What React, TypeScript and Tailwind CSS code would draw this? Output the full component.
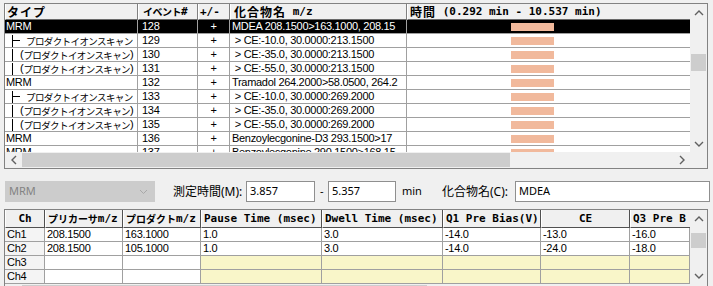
import React from "react";

const dataFont = "font-['Liberation_Sans','Noto_Sans_CJK_JP',sans-serif] text-[11px] tracking-[-0.3px]";
const headFont = "font-['DejaVu_Sans_Mono','Noto_Sans_CJK_JP',monospace] text-[11px] font-bold tracking-[0px] leading-[14px]";
const uiFont = "font-['Noto_Sans','Noto_Sans_CJK_JP',sans-serif] text-[12px]";

function Chev({ dir }: { dir: "up" | "down" | "left" | "right" }) {
  const vertical = dir === "up" || dir === "down";
  const pts =
    dir === "up" ? "1,6 5,2 9,6" : dir === "down" ? "1,2 5,6 9,2" : dir === "left" ? "6,1 2,5 6,9" : "2,1 6,5 2,9";
  return (
    <svg width={vertical ? 10 : 8} height={vertical ? 8 : 10} viewBox={vertical ? "0 0 10 8" : "0 0 8 10"}>
      <polyline points={pts} fill="none" stroke="#606060" strokeWidth="1.4" />
    </svg>
  );
}

type CjkKind = "wide" | "narrow" | "bottom";

const CJK = ({ children, kind }: { children: React.ReactNode; kind: CjkKind }) => (
  <span
    className={
      kind === "wide"
        ? "font-['Noto_Sans_CJK_JP',sans-serif] text-[12px] font-bold leading-[14px] tracking-[1px]"
        : kind === "narrow"
        ? "font-['Noto_Sans_CJK_JP',sans-serif] text-[10px] font-bold leading-[14px] tracking-[-0.5px]"
        : "font-['Noto_Sans_CJK_JP',sans-serif] text-[10px] font-bold leading-[14px] tracking-[0px]"
    }
  >
    {children}
  </span>
);

type TopRow = { k: "mrm" | "first" | "child"; ev: string; c: string; sel?: boolean };

const topRows: TopRow[] = [
  { k: "mrm", ev: "128", c: "MDEA 208.1500>163.1000, 208.15", sel: true },
  { k: "first", ev: "129", c: " > CE:-10.0, 30.0000:213.1500" },
  { k: "child", ev: "130", c: " > CE:-35.0, 30.0000:213.1500" },
  { k: "child", ev: "131", c: " > CE:-55.0, 30.0000:213.1500" },
  { k: "mrm", ev: "132", c: "Tramadol 264.2000>58.0500, 264.2" },
  { k: "first", ev: "133", c: " > CE:-10.0, 30.0000:269.2000" },
  { k: "child", ev: "134", c: " > CE:-35.0, 30.0000:269.2000" },
  { k: "child", ev: "135", c: " > CE:-55.0, 30.0000:269.2000" },
  { k: "mrm", ev: "136", c: "Benzoylecgonine-D3 293.1500>17" },
  { k: "mrm", ev: "137", c: "Benzoylecgonine 290.1500>168.15" },
];

const kata = "font-['Noto_Sans_CJK_JP',sans-serif] text-[9.5px] tracking-[-0.6px] leading-[12px]";

function TypeCell({ k }: { k: TopRow["k"] }) {
  if (k === "mrm") return <span>MRM</span>;
  if (k === "first")
    return (
      <span className="inline-flex items-center h-[13px] align-top">
        <span className="ml-[6px] inline-flex items-center w-[14px] h-[12px] border-l border-current">
          <span className="w-[7px] h-px bg-current" />
        </span>
        <span className={kata}>プロダクトイオンスキャン</span>
      </span>
    );
  return (
    <span className="inline-flex items-center h-[13px] align-top">
      <span className="ml-[6px] inline-block w-[8px] h-[12px] border-l border-current" />
      <span>(</span>
      <span className={kata}>プロダクトイオンスキャン</span>
      <span>)</span>
    </span>
  );
}

const topCell = "shrink-0 border-r border-[#a0a0a0] overflow-hidden whitespace-pre leading-[13px]";
const topHead =
  "shrink-0 h-full flex items-center border-r border-b border-r-[#808080] border-b-[#696969] border-l border-l-white bg-[#f0f0f0] overflow-hidden whitespace-pre";

function TopGrid() {
  return (
    <div className="ml-[4px] mt-[3px] w-[704px] h-[166px] border border-[#828282] flex flex-col bg-white">
      <div className="flex h-[148px]">
        <div className="w-[685px] overflow-hidden bg-white">
          <div className={`flex h-[16px] text-black ${headFont}`}>
            <div className={`${topHead} w-[133px] pl-[1px]`}>
              <CJK kind="wide">タイプ</CJK>
            </div>
            <div className={`${topHead} w-[60px] pl-[4px]`}>
              <CJK kind="narrow">イベント</CJK>
              <span>#</span>
            </div>
            <div className={`${topHead} w-[32px] pl-[1px]`}>
              <span>+/-</span>
            </div>
            <div className={`${topHead} w-[177px] pl-[3px]`}>
              <CJK kind="wide">化合物名</CJK>
              <span> m/z</span>
            </div>
            <div className={`${topHead} flex-1 pl-[2px] border-r-0`}>
              <CJK kind="wide">時間</CJK>
              <span> (0.292 min - 10.537 min)</span>
            </div>
          </div>
          {topRows.map((r, i) => (
            <div
              key={i}
              className={`flex h-[14px] border-b border-[#a0a0a0] ${dataFont} ${
                r.sel ? "bg-black text-white" : "bg-white text-black"
              }`}
            >
              <div className={`${topCell} w-[133px] pl-[1px]`}>
                <TypeCell k={r.k} />
              </div>
              <div className={`${topCell} w-[60px] pl-[4px]`}>{r.ev}</div>
              <div className={`${topCell} w-[32px] text-center`}>+</div>
              <div className={`${topCell} w-[177px] pl-[2px]`}>{r.c}</div>
              <div className="flex-1 flex items-start pt-[3px] pl-[104px]">
                <div className="w-[43px] h-[8px] bg-[#f1b99c]" />
              </div>
            </div>
          ))}
        </div>
        <div className="w-[17px] flex flex-col bg-[#f0f0f0]">
          <div className="h-[17px] flex items-center justify-center">
            <Chev dir="up" />
          </div>
          <div className="flex-1">
            <div className="mt-[33px] h-[17px] mx-[1px] bg-[#cdcdcd]" />
          </div>
          <div className="h-[17px] flex items-center justify-center">
            <Chev dir="down" />
          </div>
        </div>
      </div>
      <div className="flex h-[16px] bg-[#f0f0f0]">
        <div className="w-[17px] flex items-center justify-center">
          <Chev dir="left" />
        </div>
        <div className="w-[651px] py-[1px]">
          <div className="w-[488px] h-full bg-[#cdcdcd]" />
        </div>
        <div className="w-[17px] flex items-center justify-center">
          <Chev dir="right" />
        </div>
        <div className="w-[17px] bg-[#f0f0f0]" />
      </div>
    </div>
  );
}

function MiddleRow() {
  return (
    <div className={`flex items-center mt-[12px] h-[21px] ${uiFont}`}>
      <div className="ml-[5px] w-[150px] h-[21px] bg-[#cccccc] border border-[#cccccc] text-[#838383] text-[11px] flex items-center justify-between pl-[3px] pr-[6px]">
        <span>MRM</span>
        <svg width="9" height="6" viewBox="0 0 9 6">
          <polyline points="1,1 4.5,4.5 8,1" fill="none" stroke="#a8a8a8" strokeWidth="1" />
        </svg>
      </div>
      <div className="w-[91px] pl-[18px] text-black whitespace-nowrap">測定時間(M):</div>
      <div className="w-[69px] h-[21px] border border-[#8f8f8f] bg-white pl-[3px] text-[11px] flex items-center text-black">
        3.857
      </div>
      <div className="w-[13px] pl-[5px] text-[11px] text-black">-</div>
      <div className="w-[68px] h-[21px] border border-[#8f8f8f] bg-white pl-[3px] text-[11px] flex items-center text-black">
        5.357
      </div>
      <div className="w-[46px] pl-[6px] text-[11px] text-black">min</div>
      <div className="w-[73px] text-black whitespace-nowrap">化合物名(C):</div>
      <div className="w-[195px] h-[21px] border border-[#8f8f8f] bg-white pl-[3px] text-[11px] flex items-center text-black">
        MDEA
      </div>
    </div>
  );
}

const botCols = ["w-[40px]", "w-[78px]", "w-[78px]", "w-[121px]", "w-[121px]", "w-[98px]", "w-[89px]", "w-[60px]"];
const botHeadCell =
  "shrink-0 h-full flex items-center border-r border-b border-[#505050] border-l border-l-white bg-[#f0f0f0] overflow-hidden whitespace-pre";
const botCell = "shrink-0 h-full border-r border-[#a0a0a0] overflow-hidden whitespace-pre leading-[13px] pl-[2px]";

const botRows = [
  ["Ch1", "208.1500", "163.1000", "1.0", "3.0", "-14.0", "-13.0", "-16.0"],
  ["Ch2", "208.1500", "105.1000", "1.0", "3.0", "-14.0", "-24.0", "-18.0"],
  ["Ch3", "", "", "", "", "", "", ""],
  ["Ch4", "", "", "", "", "", "", ""],
];

function BottomGrid() {
  return (
    <div className="ml-[4px] mt-[7px] w-[704px] h-[110px] border border-[#828282] flex flex-col bg-white">
      <div className="flex h-[74px]">
        <div className="w-[685px] overflow-hidden">
          <div className={`flex h-[18px] text-black ${headFont}`}>
            <div className={`${botHeadCell} ${botCols[0]} justify-center`}>
              <span>Ch</span>
            </div>
            <div className={`${botHeadCell} ${botCols[1]} pl-[2px]`}>
              <CJK kind="bottom">プリカーサ</CJK>
              <span>m/z</span>
            </div>
            <div className={`${botHeadCell} ${botCols[2]} pl-[2px]`}>
              <CJK kind="bottom">プロダクト</CJK>
              <span>m/z</span>
            </div>
            <div className={`${botHeadCell} ${botCols[3]} pl-[2px]`}>
              <span>Pause Time (msec)</span>
            </div>
            <div className={`${botHeadCell} ${botCols[4]} pl-[2px]`}>
              <span>Dwell Time (msec)</span>
            </div>
            <div className={`${botHeadCell} ${botCols[5]} pl-[2px]`}>
              <span>Q1 Pre Bias(V)</span>
            </div>
            <div className={`${botHeadCell} ${botCols[6]} justify-center`}>
              <span>CE</span>
            </div>
            <div className={`${botHeadCell} flex-1 pl-[2px] border-r-0`}>
              <span>Q3 Pre B</span>
            </div>
          </div>
          {botRows.map((r, i) => (
            <div key={i} className={`flex h-[14px] border-b border-[#a0a0a0] text-black ${dataFont}`}>
              {r.map((v, j) => (
                <div
                  key={j}
                  className={`${botCell} ${j === 7 ? "flex-1" : botCols[j]} ${
                    j === 0 ? "bg-[#f4f4f4]" : i >= 2 && j >= 3 ? "bg-[#f9f6c9]" : "bg-white"
                  }`}
                >
                  {v}
                </div>
              ))}
            </div>
          ))}
        </div>
        <div className="w-[17px] flex flex-col bg-[#f0f0f0]">
          <div className="h-[17px] flex items-center justify-center">
            <Chev dir="up" />
          </div>
          <div className="flex-1">
            <div className="mt-[6px] h-[15px] mx-[1px] bg-[#cdcdcd]" />
          </div>
          <div className="h-[17px] flex items-center justify-center">
            <Chev dir="down" />
          </div>
        </div>
      </div>
      <div className="flex h-[17px] bg-[#f0f0f0]">
        <div className="w-[17px]" />
        <div className="w-[651px] py-[1px]">
          <div className="w-[405px] h-full bg-[#cdcdcd]" />
        </div>
        <div className="w-[17px]" />
        <div className="w-[17px]" />
      </div>
    </div>
  );
}

export default function App() {
  return (
    <div className="w-[713px] h-[286px] overflow-hidden bg-[#f0f0f0] flex flex-col">
      <TopGrid />
      <MiddleRow />
      <BottomGrid />
    </div>
  );
}
